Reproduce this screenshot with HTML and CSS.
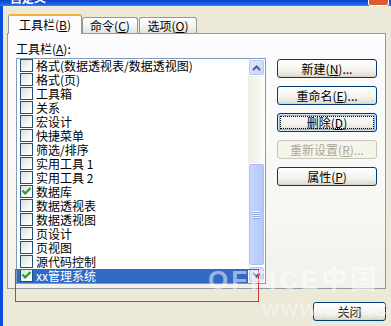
FILE: index.html
```html
<!DOCTYPE html>
<html lang="zh-CN">
<head>
    <meta charset="UTF-8">
    <title>自定义</title>
    <link rel="stylesheet" href="styles.css">
</head>
<body>
    <div class="window">
        <div class="titlebar">
            <span class="title">自定义</span>
            <span class="close-x"></span>
        </div>
        <div class="frame">
            <div class="tabs">
                <div class="tab active">工具栏(<u>B</u>)</div>
                <div class="tab t2">命令(<u>C</u>)</div>
                <div class="tab t3">选项(<u>O</u>)</div>
            </div>
            <div class="panel">
                <div class="label">工具栏(<u>A</u>):</div>
                <div class="panel-body">
                    <div class="listbox">
                        <ul class="items">
                            <li><span class="cb"></span>格式(数据透视表/数据透视图)</li>
                            <li><span class="cb"></span>格式(页)</li>
                            <li><span class="cb"></span>工具箱</li>
                            <li><span class="cb"></span>关系</li>
                            <li><span class="cb"></span>宏设计</li>
                            <li><span class="cb"></span>快捷菜单</li>
                            <li><span class="cb"></span>筛选/排序</li>
                            <li><span class="cb"></span>实用工具 1</li>
                            <li><span class="cb"></span>实用工具 2</li>
                            <li><span class="cb"><svg width="11" height="11" viewBox="0 0 11 11"><polyline points="1.5,4.5 4.2,7.5 9.5,2" fill="none" stroke="#21a121" stroke-width="2.2"/></svg></span>数据库</li>
                            <li><span class="cb"></span>数据透视表</li>
                            <li><span class="cb"></span>数据透视图</li>
                            <li><span class="cb"></span>页设计</li>
                            <li><span class="cb"></span>页视图</li>
                            <li><span class="cb"></span>源代码控制</li>
                            <li class="selected"><span class="cb"><svg width="11" height="11" viewBox="0 0 11 11"><polyline points="1.5,4.5 4.2,7.5 9.5,2" fill="none" stroke="#21a121" stroke-width="2.2"/></svg></span>xx管理系统</li>
                        </ul>
                        <div class="scrollbar">
                            <div class="sb-btn">
                                <svg width="9" height="6" viewBox="0 0 9 6"><polyline points="1,5 4.5,1.5 8,5" fill="none" stroke="#4d6185" stroke-width="2"/></svg>
                            </div>
                            <div class="sb-track"></div>
                            <div class="sb-thumb"><span class="grip"></span></div>
                            <div class="sb-btn">
                                <svg width="9" height="6" viewBox="0 0 9 6"><polyline points="1,1 4.5,4.5 8,1" fill="none" stroke="#4d6185" stroke-width="2"/></svg>
                            </div>
                        </div>
                    </div>
                    <div class="buttons">
                        <button class="btn">新建(<u>N</u>)...</button>
                        <button class="btn">重命名(<u>E</u>)...</button>
                        <button class="btn focused">删除(<u>D</u>)</button>
                        <button class="btn" disabled>重新设置(<u>R</u>)...</button>
                        <button class="btn">属性(<u>P</u>)</button>
                    </div>
                </div>
            </div>
            <div class="footer">
                <button class="btn close-btn">关闭</button>
            </div>
        </div>

        <!-- annotation + watermark drawn over the screenshot -->
        <div class="mark-box"></div>
        <div class="watermark">
            <div class="wm-big">OFFICE中国</div>
            <div class="wm-small">WWW.OFFICE-CN.NET</div>
        </div>
    </div>
</body>
</html>
```
FILE: styles.css
```css
body {
    margin: 0;
    width: 391px;
    height: 326px;
    overflow: hidden;
    background-color: #ece9d8;
    font-family: "Noto Sans CJK SC", "Liberation Sans", sans-serif;
    font-size: 12px;
    color: #000;
}
.window {
    position: relative;
    display: flex;
    flex-direction: column;
    height: 326px;
    overflow: hidden;
}
.titlebar {
    height: 6px;
    overflow: hidden;
    display: flex;
    align-items: flex-start;
    background: linear-gradient(#0a3fc8, #1c62ea 70%, #3f84f4);
}
.title {
    color: #fff;
    font-weight: bold;
    font-size: 12px;
    line-height: 14px;
    margin: -9px 0 0 10px;
}
.close-x {
    margin-left: auto;
    margin-right: 2px;
    width: 19px;
    height: 5px;
    background: #dd5a30;
    border: 1px solid #fff;
    border-top: none;
    border-radius: 0 0 3px 3px;
}
.frame {
    flex: 1;
    display: flex;
    flex-direction: column;
    border-left: 3px solid #0b4ddf;
    padding: 8px 5px 0 4px;
}
.tabs {
    display: flex;
    align-items: flex-end;
    height: 20px;
    padding-left: 1px;
    margin-bottom: -1px;
    position: relative;
    z-index: 1;
}
.tab {
    box-sizing: border-box;
    height: 16px;
    margin-bottom: 1px;
    line-height: 15px;
    text-align: center;
    border: 1px solid #919b9c;
    border-bottom: none;
    border-radius: 3px 3px 0 0;
    background: linear-gradient(#ffffff, #f3f3ef 60%, #e3e2da);
}
.tab.active {
    width: 74px;
    height: 20px;
    margin-bottom: 0;
    line-height: 18px;
    background: #fcfcfe;
    border-top: 2px solid #f6b13b;
    border-radius: 3px 3px 0 0;
}
.tab.t2 {
    width: 56px;
}
.tab.t3 {
    width: 58px;
    margin-left: 1px;
}
.panel {
    box-sizing: border-box;
    height: 256px;
    border: 1px solid #919b9c;
    background: linear-gradient(#fcfcfe, #f7f7f4 70%, #f1f0ea);
    padding: 8px 0 0 8px;
}
.label {
    line-height: 14px;
}
.panel-body {
    display: flex;
    align-items: flex-start;
    margin-top: 2px;
}
.listbox {
    box-sizing: border-box;
    width: 250px;
    height: 226px;
    border: 1px solid #7f9db9;
    background: #fff;
    display: flex;
}
.items {
    list-style: none;
    margin: 0;
    padding: 0;
    width: 231px;
}
.items li {
    display: flex;
    align-items: flex-start;
    height: 14px;
    line-height: 14px;
    white-space: nowrap;
}
.items li.selected {
    background: #316ac5;
    color: #fff;
}
.cb {
    box-sizing: border-box;
    width: 13px;
    height: 13px;
    margin: 0 3px 0 3px;
    border: 1px solid #1c5180;
    background: linear-gradient(135deg, #dcdcd7, #f6f6f4 60%, #ffffff);
    display: flex;
    align-items: center;
    justify-content: center;
}
.scrollbar {
    width: 17px;
    display: flex;
    flex-direction: column;
    background: linear-gradient(to right, #eeede5, #fcfcf9);
}
.sb-btn {
    box-sizing: border-box;
    height: 17px;
    border: 1px solid #fff;
    border-radius: 3px;
    background: linear-gradient(135deg, #e2ebfe, #c2d4fb);
    box-shadow: inset 0 0 0 1px #b4c8f6;
    display: flex;
    align-items: center;
    justify-content: center;
}
.sb-track {
    height: 87px;
}
.sb-thumb {
    box-sizing: border-box;
    height: 103px;
    border: 1px solid #fff;
    border-radius: 3px;
    background: linear-gradient(to right, #c9d8fc, #bccffa 50%, #b3c8f7);
    box-shadow: inset 0 0 0 1px #a9bff2;
    display: flex;
    align-items: center;
    justify-content: center;
}
.grip {
    width: 7px;
    height: 8px;
    background: repeating-linear-gradient(#eef3ff 0 1px, #8ca6e4 1px 2px);
}
.buttons {
    display: flex;
    flex-direction: column;
    gap: 8px;
    margin: 1px 0 0 11px;
}
.btn {
    box-sizing: border-box;
    width: 100px;
    height: 19px;
    padding: 0;
    font-family: inherit;
    font-size: 12px;
    line-height: 16px;
    color: #000;
    border: 1px solid #003c74;
    border-radius: 3px;
    background: linear-gradient(#ffffff, #f3f2ed 60%, #e3e0d4 90%, #d6d0c5);
}
.btn.focused {
    box-shadow: inset 0 0 0 1px #cee7ff, inset 0 0 0 2px #89ade4;
    outline: 1px dotted #000;
    outline-offset: -4px;
}
.btn:disabled {
    color: #aca899;
    border-color: #c9c7ba;
    background: #f5f4ea;
}
.footer {
    display: flex;
    justify-content: flex-end;
    margin-top: 13px;
}
.close-btn {
    width: 73px;
}
.mark-box {
    position: absolute;
    left: 15px;
    top: 269px;
    width: 244px;
    height: 33px;
    box-sizing: border-box;
    border: 1px solid #c8383c;
}
.watermark {
    position: absolute;
    left: 208px;
    top: 264px;
    width: 183px;
    height: 62px;
    overflow: hidden;
    color: rgba(255, 255, 255, 0.5);
    font-family: "Liberation Sans", "Noto Sans CJK SC", sans-serif;
    font-weight: bold;
    white-space: nowrap;
    pointer-events: none;
}
.wm-big {
    font-size: 26px;
    line-height: 32px;
    letter-spacing: 3px;
}
.wm-small {
    margin: 4px 0 0 54px;
    font-size: 18px;
    line-height: 20px;
    letter-spacing: 2px;
    font-weight: normal;
}
```
